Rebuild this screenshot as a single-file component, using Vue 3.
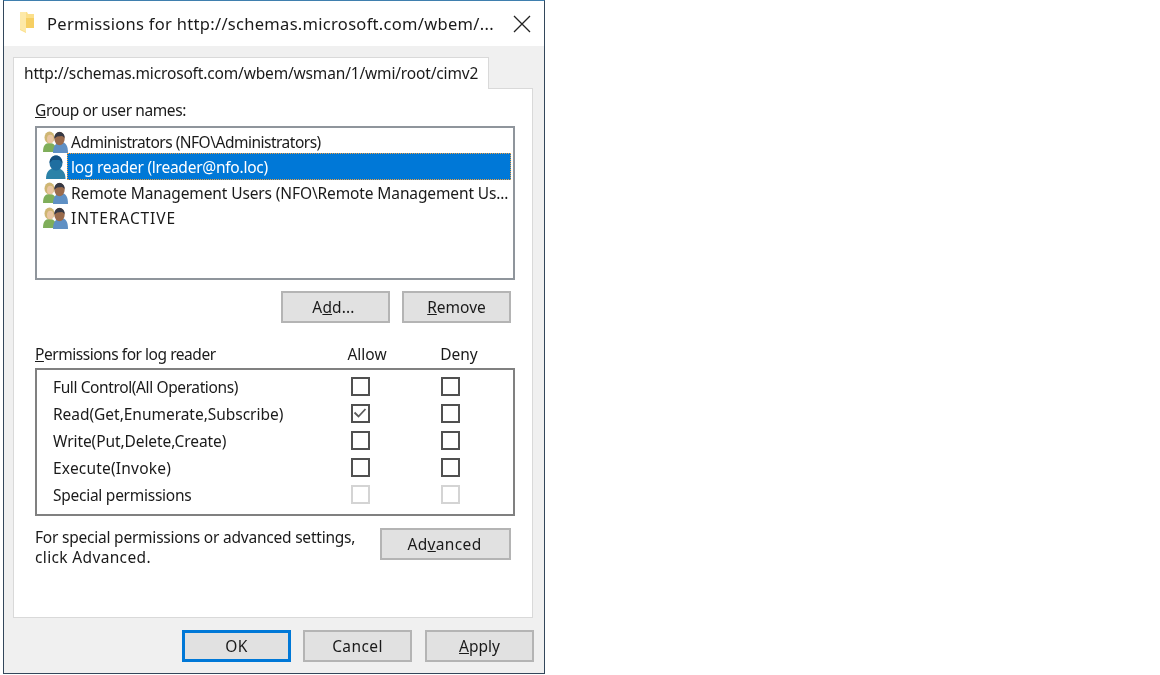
<script setup>
const users = [
  { id: 1, text: 'Administrators (NFO\\Administrators)', selected: false, spacing: -0.5 },
  { id: 2, text: 'log reader (lreader@nfo.loc)', selected: true, spacing: -0.25 },
  { id: 3, text: 'Remote Management Users (NFO\\Remote Management Us...', selected: false, spacing: -0.12 },
  { id: 4, text: 'INTERACTIVE', selected: false, spacing: 0.9 },
]
const perms = [
  { name: 'Full Control(All Operations)', allow: false, disabled: false, spacing: -0.39 },
  { name: 'Read(Get,Enumerate,Subscribe)', allow: true, disabled: false, spacing: -0.03 },
  { name: 'Write(Put,Delete,Create)', allow: false, disabled: false, spacing: -0.08 },
  { name: 'Execute(Invoke)', allow: false, disabled: false, spacing: 0.2 },
  { name: 'Special permissions', allow: false, disabled: true, spacing: -0.26 },
]
</script>

<template>
  <div class="window">
    <header class="titlebar">
      <svg class="folder" width="16" height="21" viewBox="0 0 16 21">
        <path d="M1 0h7l1 2h6v14H7v5l-6-3z" fill="#fbdf8a" />
        <path d="M7 6h8v10H7z" fill="#f6cf63" />
        <path d="M1 0h6v20l-6-3z" fill="#fde9a8" />
      </svg>
      <span class="title">Permissions for http://schemas.microsoft.com/wbem/...</span>
      <svg class="close" width="18" height="18" viewBox="0 0 18 18">
        <path d="M1 1l16 16M17 1L1 17" stroke="#222" stroke-width="1.300" fill="none" />
      </svg>
    </header>

    <div class="body">
      <div class="tab">http://schemas.microsoft.com/wbem/wsman/1/wmi/root/cimv2</div>
      <section class="page">
        <div class="label"><u>G</u>roup or user names:</div>
        <ul class="list">
          <li v-for="u in users" :key="u.id" class="row">
            <svg v-if="!u.selected" class="people" width="25" height="22" viewBox="0 0 25 22">
              <path d="M0 21c0-6 2-9 6.500-9s7 3 7 9z" fill="#7fae5a" />
              <ellipse cx="6.500" cy="6.500" rx="5" ry="6" fill="#cfb673" />
              <ellipse cx="7.300" cy="8" rx="3.300" ry="4.300" fill="#e9c6a2" />
              <path d="M10 22c0-7 3-11 8-11s7 4 7 11z" fill="#5f90c4" />
              <ellipse cx="16.500" cy="7.500" rx="5.200" ry="6.700" fill="#9a6b4c" />
              <path d="M11.300 7.500C11.300 3.500 13.500 1 16.500 1S21.700 3.500 21.700 7l-2.500-2-5 .5z" fill="#353844" />
            </svg>
            <svg v-else class="people" width="25" height="24" viewBox="0 0 25 24">
              <path d="M3 24c0-7 3-11 9.500-11s10 4 10 11z" fill="#2c82a8" />
              <ellipse cx="13" cy="8" rx="6.500" ry="7.500" fill="#1f6ea0" />
              <path d="M6.500 8C6.500 3 9.500.5 13 .5S19.500 3 19.500 8l-3-3h-7z" fill="#15507e" />
            </svg>
            <span class="name" :class="{ selected: u.selected }" :style="{ letterSpacing: u.spacing + 'px' }">{{ u.text }}</span>
          </li>
        </ul>

        <div class="actions">
          <button class="btn add">A<u>d</u>d...</button>
          <button class="btn"><u>R</u>emove</button>
        </div>

        <div class="perm-head">
          <span class="perm-label"><u>P</u>ermissions for log reader</span>
          <span class="col">Allow</span>
          <span class="col">Deny</span>
        </div>
        <div class="perm-box">
          <div v-for="p in perms" :key="p.name" class="perm-row">
            <span class="perm-name" :style="{ letterSpacing: p.spacing + 'px' }">{{ p.name }}</span>
            <span class="check" :class="{ off: p.disabled }">
              <svg v-if="p.allow" width="14" height="14" viewBox="0 0 14 14">
                <path d="M1.500 6.500l4 4 7-7.500" stroke="#5c5c5c" stroke-width="1.800" fill="none" />
              </svg>
            </span>
            <span class="check" :class="{ off: p.disabled }"></span>
          </div>
        </div>

        <div class="advanced">
          <p class="note"><span class="line-a">For special permissions or advanced settings,</span><br /><span class="line-b">click Advanced.</span></p>
          <button class="btn wide">Ad<u>v</u>anced</button>
        </div>
      </section>

      <footer class="footer">
        <button class="btn primary">OK</button>
        <button class="btn cancel">Cancel</button>
        <button class="btn apply"><u>A</u>pply</button>
      </footer>
    </div>
  </div>
</template>

<style>
html, body { background: #fff; margin: 0; }
</style>

<style scoped>
.window {
  box-sizing: border-box;
  width: 542px;
  height: 674px;
  margin-left: 3px;
  border: 1px solid #33475b;
  border-top-color: #3f7fae;
  background: #f0f0f0;
  font: 15.5px/20px "Noto Sans", "Open Sans", sans-serif;
  color: #1a1a1a;
  filter: blur(0.45px);
  overflow: hidden;
}
.titlebar {
  height: 45px;
  background: #fff;
  display: flex;
  align-items: center;
}
.folder { margin-left: 15px; margin-right: 12px; position: relative; top: -1px; }
.title { font-size: 16.5px; flex: 1; white-space: nowrap; letter-spacing: 0.3px; }
.close { margin-right: 13px; }
.body { padding: 11px 0 0 9px; }
.tab {
  box-sizing: border-box;
  width: 476px;
  height: 32px;
  padding: 5px 0 0 10px;
  background: #fff;
  border: 1px solid #d9d9d9;
  border-bottom: 0;
  position: relative;
  z-index: 1;
  white-space: nowrap;
  letter-spacing: -0.16px;
}
.page {
  box-sizing: border-box;
  width: 520px;
  height: 530px;
  margin-top: -1px;
  padding: 11px 17px 0 21px;
  background: #fff;
  border: 1px solid #d9d9d9;
}
.label { height: 20px; letter-spacing: -0.4px; }
.list {
  box-sizing: border-box;
  height: 154px;
  margin: 6px 0 0;
  padding: 1.300px 2px 0 6px;
  list-style: none;
  border: 2px solid #8f959c;
}
.row {
  height: 25.4px;
  display: flex;
  align-items: center;
  white-space: nowrap;
}
.people { flex: none; width: 25px; }
.name { padding-left: 3px; line-height: 24px; flex: 1; border: 1px solid transparent; margin-left: -1px; overflow: hidden; }
.name.selected {
  background: #0078d7;
  color: #fff;
  border: 1px dotted #f0a040;
  padding-top: 1px;
  margin-top: -1px;
}
.actions {
  display: flex;
  justify-content: flex-end;
  gap: 12px;
  margin-top: 11px;
  padding-right: 4px;
}
.btn {
  box-sizing: border-box;
  width: 109px;
  height: 32px;
  padding: 0;
  background: #e1e1e1;
  border: 2px solid #b4b4b4;
  font: inherit;
  color: inherit;
}
.btn.add { letter-spacing: 0.15px; padding-right: 4px; }
.btn.wide { width: 131px; margin: 0; letter-spacing: 0.35px; padding-right: 2px; }
.btn.primary { border: 3px solid #0078d7; letter-spacing: 0.5px; }
.btn.cancel { letter-spacing: 0.4px; }
.btn.apply { margin-left: 1px; }
.perm-head {
  display: grid;
  align-items: center;
  grid-template-columns: 292px 80px 104px;
  height: 20px;
  margin-top: 21px;
}
.perm-label { letter-spacing: -0.46px; white-space: nowrap; }
.col { text-align: center; }
.perm-box {
  box-sizing: border-box;
  height: 148px;
  margin-top: 4px;
  padding: 3px 0 0 16px;
  border: 2px solid #808080;
}
.perm-row {
  display: flex;
  align-items: center;
  height: 27px;
  white-space: nowrap;
}
.perm-name { width: 298px; }
.check {
  box-sizing: border-box;
  width: 19px;
  height: 19px;
  border: 2px solid #505050;
  display: flex;
  background: #fff;
}
.check + .check { margin-left: 71px; }
.check.off { border-color: #d4d4d4; }
.advanced {
  display: flex;
  justify-content: space-between;
  margin-top: 12px;
  padding-right: 4px;
}
.note { margin: -1px 0 0; white-space: nowrap; }
.line-a { letter-spacing: -0.22px; }
.line-b { letter-spacing: 0.35px; }
.footer {
  display: flex;
  justify-content: flex-end;
  gap: 12px;
  margin-top: 12px;
  padding-right: 10px;
}
</style>
